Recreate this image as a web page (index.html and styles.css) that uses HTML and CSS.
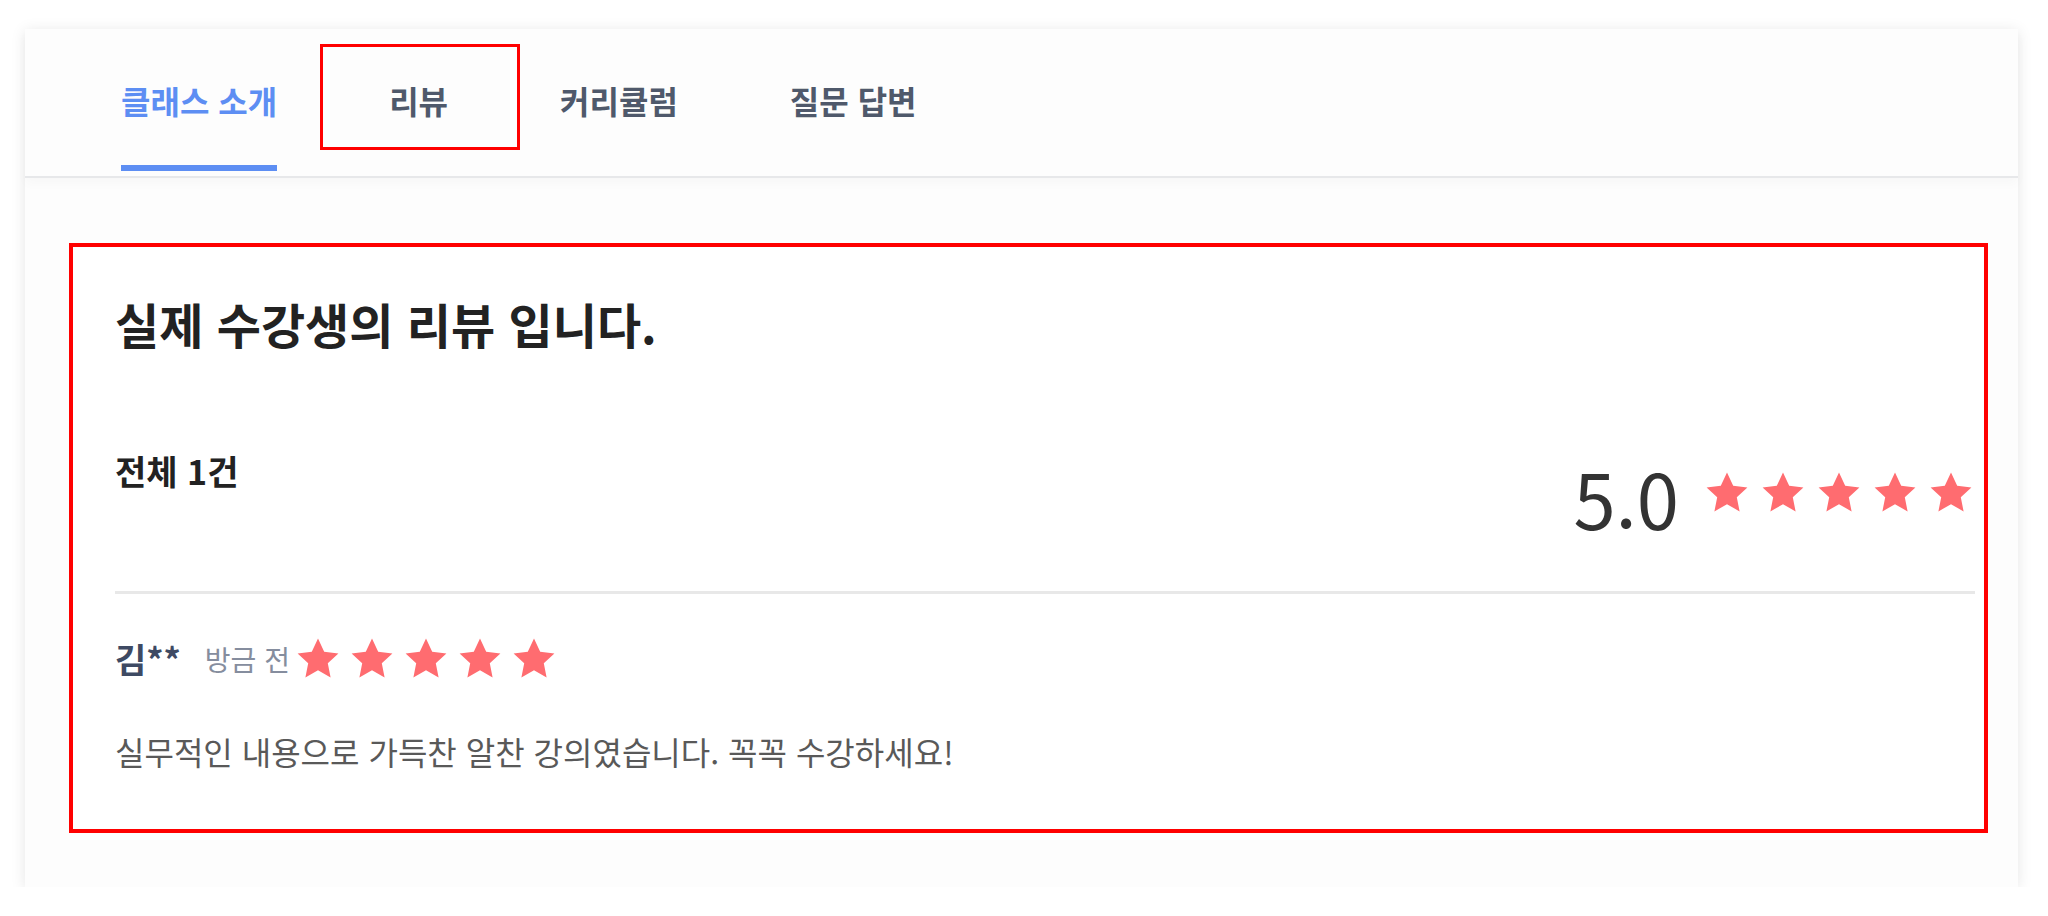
FILE: index.html
```html
<!DOCTYPE html>
<html lang="ko">
<head>
    <meta charset="UTF-8">
    <meta name="viewport" content="width=device-width, initial-scale=1.0">
    <title>클래스 리뷰</title>
    <link rel="stylesheet" href="styles.css">
</head>
<body>
    <div class="card">
        <!-- Tabs -->
        <nav class="tabs">
            <a class="tab active" href="#intro">클래스 소개</a>
            <a class="tab marked" href="#review">리뷰</a>
            <a class="tab" href="#curriculum">커리큘럼</a>
            <a class="tab" href="#qna">질문 답변</a>
        </nav>

        <!-- Reviews -->
        <section class="review-section" id="review">
            <h2 class="review-title">실제 수강생의 리뷰 입니다.</h2>

            <div class="summary">
                <p class="total">전체 1건</p>
                <div class="rating">
                    <span class="score">5.0</span>
                    <div class="stars">
                        <svg viewBox="0 0 24 24"><path d="M12 1.8l3.1 6.6 7.1.8-5.3 4.9 1.4 7.1L12 17.6l-6.3 3.6 1.4-7.1-5.3-4.9 7.1-.8z"/></svg>
                        <svg viewBox="0 0 24 24"><path d="M12 1.8l3.1 6.6 7.1.8-5.3 4.9 1.4 7.1L12 17.6l-6.3 3.6 1.4-7.1-5.3-4.9 7.1-.8z"/></svg>
                        <svg viewBox="0 0 24 24"><path d="M12 1.8l3.1 6.6 7.1.8-5.3 4.9 1.4 7.1L12 17.6l-6.3 3.6 1.4-7.1-5.3-4.9 7.1-.8z"/></svg>
                        <svg viewBox="0 0 24 24"><path d="M12 1.8l3.1 6.6 7.1.8-5.3 4.9 1.4 7.1L12 17.6l-6.3 3.6 1.4-7.1-5.3-4.9 7.1-.8z"/></svg>
                        <svg viewBox="0 0 24 24"><path d="M12 1.8l3.1 6.6 7.1.8-5.3 4.9 1.4 7.1L12 17.6l-6.3 3.6 1.4-7.1-5.3-4.9 7.1-.8z"/></svg>
                    </div>
                </div>
            </div>

            <div class="review-item">
                <div class="review-head">
                    <span class="author">김**</span>
                    <span class="time">방금 전</span>
                    <div class="stars small">
                        <svg viewBox="0 0 24 24"><path d="M12 1.8l3.1 6.6 7.1.8-5.3 4.9 1.4 7.1L12 17.6l-6.3 3.6 1.4-7.1-5.3-4.9 7.1-.8z"/></svg>
                        <svg viewBox="0 0 24 24"><path d="M12 1.8l3.1 6.6 7.1.8-5.3 4.9 1.4 7.1L12 17.6l-6.3 3.6 1.4-7.1-5.3-4.9 7.1-.8z"/></svg>
                        <svg viewBox="0 0 24 24"><path d="M12 1.8l3.1 6.6 7.1.8-5.3 4.9 1.4 7.1L12 17.6l-6.3 3.6 1.4-7.1-5.3-4.9 7.1-.8z"/></svg>
                        <svg viewBox="0 0 24 24"><path d="M12 1.8l3.1 6.6 7.1.8-5.3 4.9 1.4 7.1L12 17.6l-6.3 3.6 1.4-7.1-5.3-4.9 7.1-.8z"/></svg>
                        <svg viewBox="0 0 24 24"><path d="M12 1.8l3.1 6.6 7.1.8-5.3 4.9 1.4 7.1L12 17.6l-6.3 3.6 1.4-7.1-5.3-4.9 7.1-.8z"/></svg>
                    </div>
                </div>
                <p class="review-text">실무적인 내용으로 가득찬 알찬 강의였습니다. 꼭꼭 수강하세요!</p>
            </div>
        </section>
    </div>
</body>
</html>
```

FILE: styles.css
```css
/* General Styles */
body {
    margin: 0;
    font-family: "Noto Sans CJK KR", "Noto Sans", sans-serif;
    background-color: #fff;
    color: #222;
}

.card {
    margin: 29px 30px 0 25px;
    padding-bottom: 54px;
    background-color: #fdfdfd;
    box-shadow: 0 2px 14px rgba(0, 0, 0, 0.1);
}

/* Tabs */
.tabs {
    display: flex;
    gap: 112px;
    height: 142px;
    padding: 0 0 5px 96px;
    border-bottom: 2px solid #e7e8ea;
    box-shadow: 0 6px 10px rgba(0, 0, 0, 0.025);
}

.tab {
    position: relative;
    display: flex;
    align-items: center;
    padding-top: 6px;
    border-bottom: 6px solid transparent;
    font-size: 32px;
    font-weight: 700;
    color: #4f596b;
    text-decoration: none;
}

.tab.active {
    color: #5d8ef3;
    border-bottom-color: #5d8ef3;
}

/* red marker around the review tab */
.tab.marked::before {
    content: "";
    position: absolute;
    top: 15px;
    bottom: 15px;
    left: -69px;
    right: -72px;
    border: 3px solid #f00;
}

/* Review section */
.review-section {
    margin: 65px 30px 0 44px;
    padding: 46px 9px 55px 42px;
    border: 4px solid #f00;
    background-color: #fff;
}

.review-title {
    margin: 0;
    font-size: 48px;
    line-height: 60px;
    font-weight: 700;
    color: #222;
}

.summary {
    display: flex;
    justify-content: space-between;
    align-items: flex-start;
    margin-top: 95px;
    padding-bottom: 53px;
    border-bottom: 3px solid #e8e8e8;
}

.total {
    margin: 0;
    font-size: 34px;
    line-height: 45px;
    font-weight: 700;
    color: #222;
}

.rating {
    display: flex;
    align-items: center;
    height: 90px;
    gap: 24px;
}

.score {
    font-size: 76px;
    line-height: 1;
    color: #333;
    padding-top: 8px;
}

.stars {
    display: flex;
    gap: 8px;
}

.stars svg {
    width: 48px;
    height: 48px;
    fill: #ff6c70;
}

.stars.small {
    gap: 6px;
}

.review-item {
    padding-top: 42px;
}

.review-head {
    display: flex;
    align-items: center;
    height: 45px;
}

.author {
    font-size: 34px;
    font-weight: 700;
    color: #3e4a63;
    margin-right: 24px;
}

.time {
    font-size: 28px;
    color: #858d9e;
    margin-right: 4px;
}

.review-text {
    margin: 48px 0 0;
    font-size: 32px;
    line-height: 45px;
    color: #595959;
}
```
